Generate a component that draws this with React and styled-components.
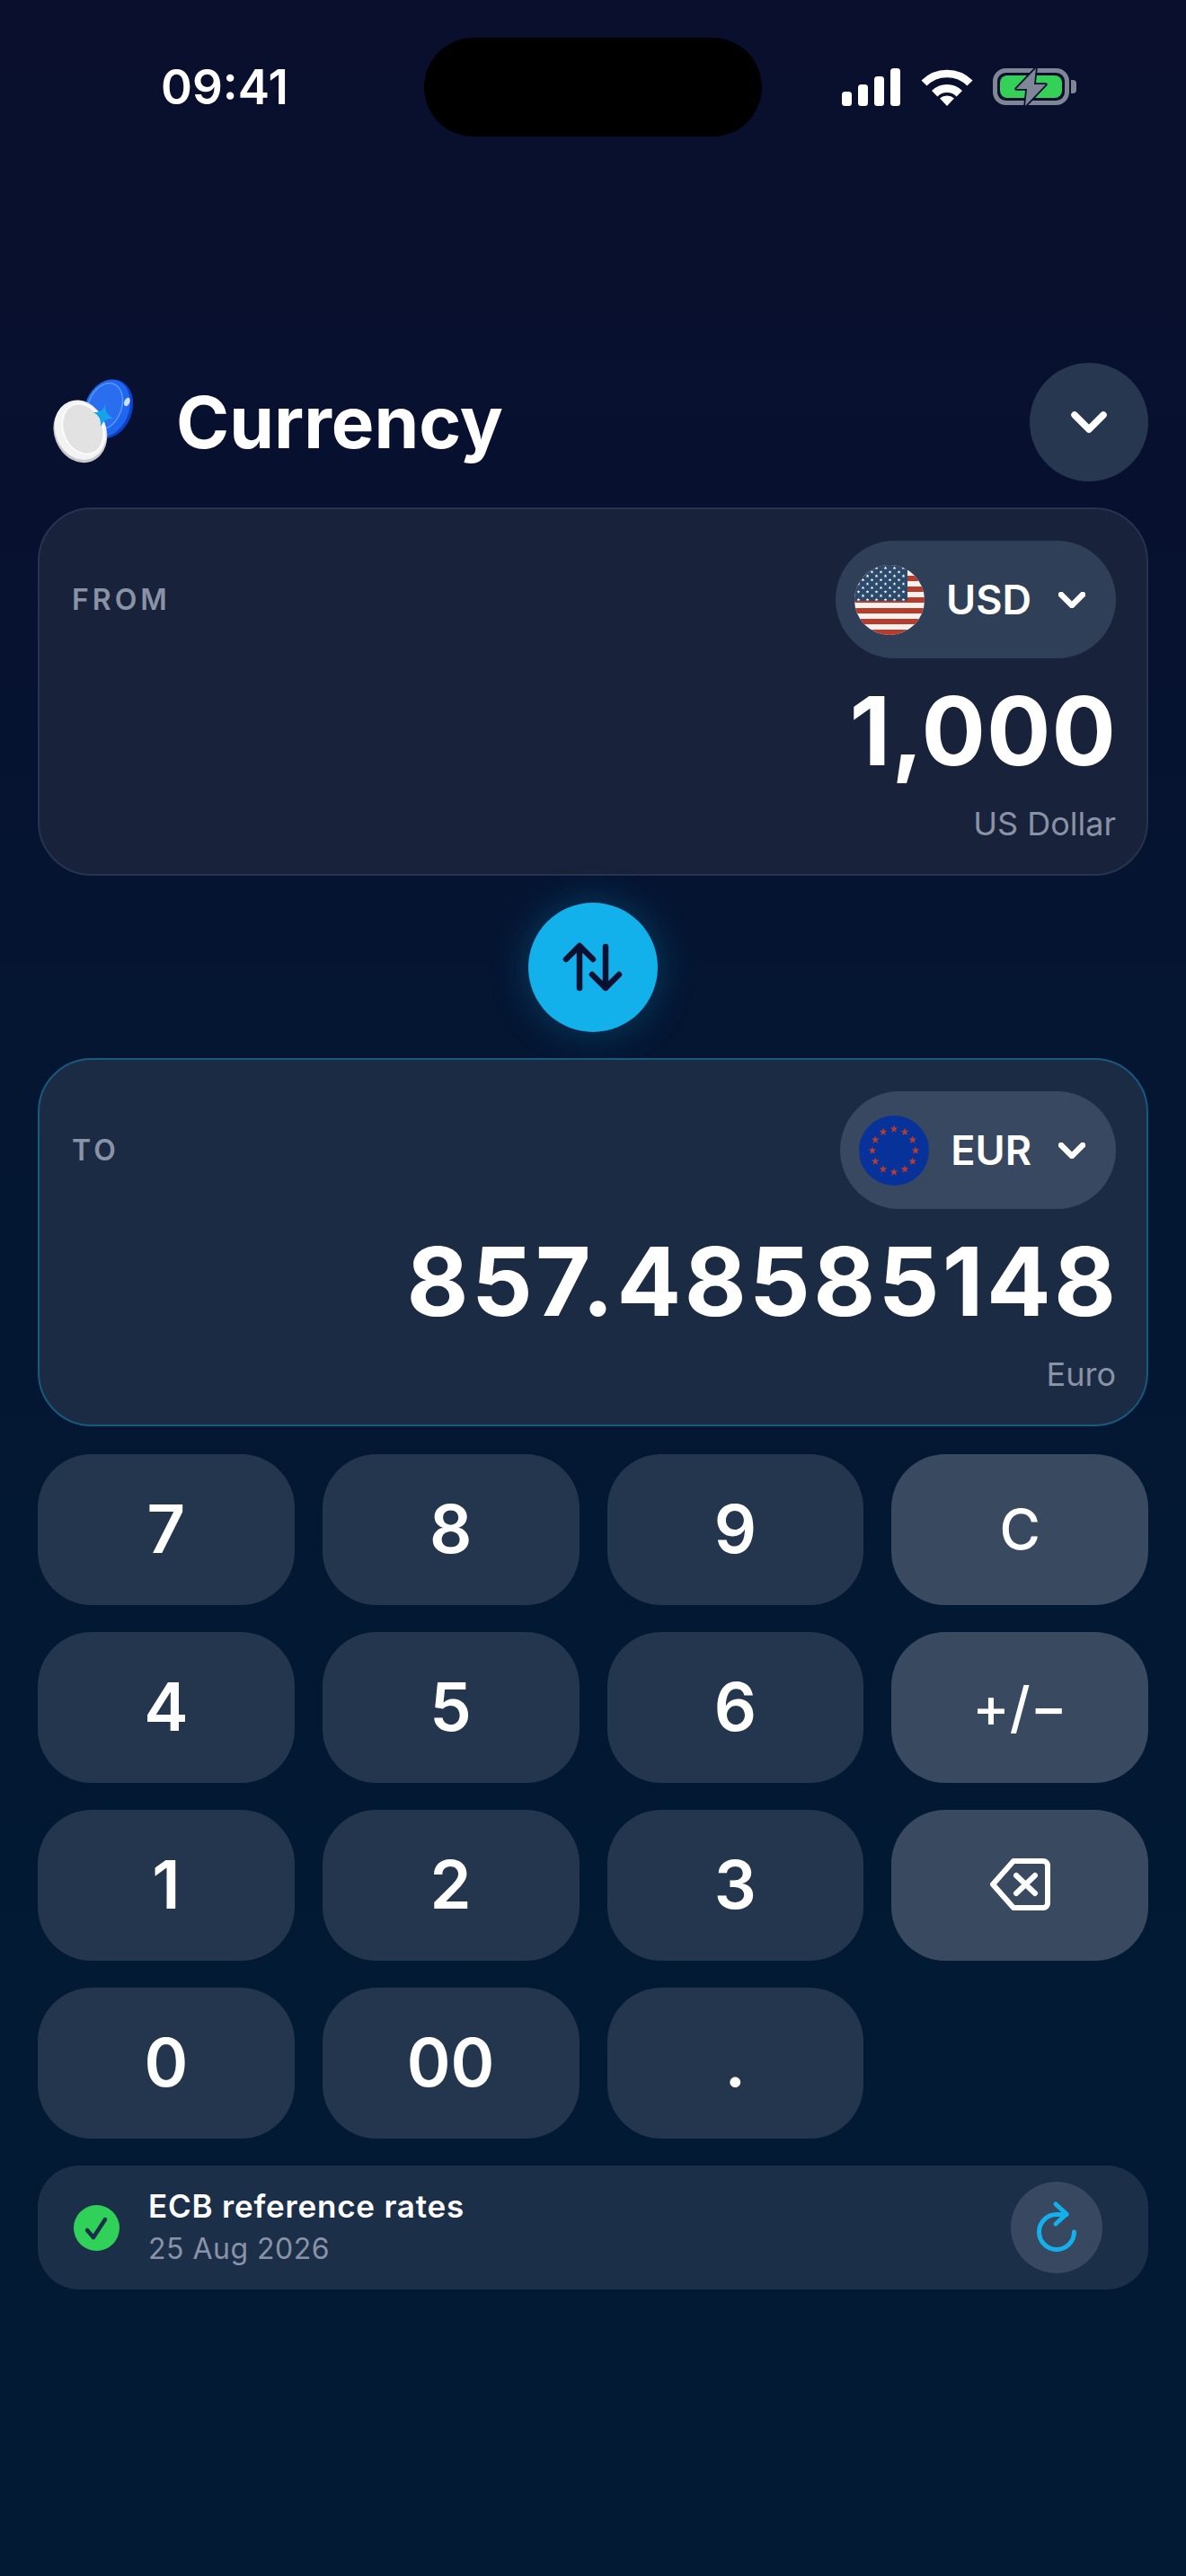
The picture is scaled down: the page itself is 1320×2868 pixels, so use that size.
import React from "react";
import styled, { createGlobalStyle } from "styled-components";

const Global = createGlobalStyle`
  html, body { margin: 0; padding: 0; background: #021a33; }
  * { box-sizing: border-box; }
`;

const Screen = styled.div`
  width: 1320px;
  height: 2868px;
  overflow: hidden;
  font-family: Inter, "Liberation Sans", sans-serif;
  color: #fff;
  background: linear-gradient(180deg, #090f2d 0%, #07112f 20%, #041632 42%, #021a33 80%, #021a33 100%);
`;

const StatusBar = styled.div`
  display: grid;
  grid-template-columns: 472px 376px 472px;
  align-items: center;
  height: 152px;
  padding-top: 42px;
`;

const Time = styled.div`
  padding-left: 179px;
  font-size: 53px;
  font-weight: 600;
  line-height: 60px;
`;

const Island = styled.div`
  height: 110px;
  border-radius: 55px;
  background: #000;
`;

const StatusIcons = styled.div`
  padding-left: 89px;
  display: flex;
  align-items: center;
`;

const Content = styled.main`
  margin-top: 252px;
  padding: 0 42px;
  display: flex;
  flex-direction: column;
`;

const Header = styled.header`
  display: flex;
  align-items: center;
  height: 132px;
  padding-left: 17px;
  margin-bottom: 29px;
`;

const Title = styled.h1`
  margin: 0 0 0 45px;
  flex: 1;
  font-size: 80px;
  font-weight: 700;
  line-height: 96px;
`;

const MenuButton = styled.button`
  width: 132px;
  height: 132px;
  border: 0;
  padding: 0;
  border-radius: 50%;
  background: #273750;
  display: flex;
  align-items: center;
  justify-content: center;
`;

const Card = styled.section`
  height: 410px;
  border-radius: 60px;
  padding: 35px 34px 0 36px;
  border: 2px solid ${(p) => (p.$active ? "#175a80" : "#273350")};
  background: ${(p) => (p.$active ? "#1c2b44" : "#18223a")};
`;

const CardTop = styled.div`
  display: flex;
  justify-content: space-between;
  align-items: center;
`;

const Label = styled.span`
  font-size: 32px;
  font-weight: 600;
  letter-spacing: 4px;
  color: #8a92a5;
`;

const Pill = styled.div`
  height: 131px;
  border-radius: 66px;
  padding: 0 34px 0 21px;
  background: ${(p) => (p.$active ? "#384860" : "#2f3f58")};
  display: flex;
  align-items: center;
`;

const Code = styled.span`
  margin: 0 30px 0 24px;
  font-size: 45px;
  font-weight: 600;
  line-height: 54px;
`;

const Amount = styled.div`
  margin-top: 31px;
  margin-right: ${(p) => -p.$tracking}px;
  text-align: right;
  font-size: 106px;
  font-weight: 700;
  line-height: 100px;
  letter-spacing: ${(p) => p.$tracking}px;
`;

const CurrencyName = styled.div`
  margin-top: 33px;
  text-align: right;
  font-size: 36px;
  line-height: 40px;
  color: #8a92a5;
`;

const SwapRow = styled.div`
  display: flex;
  justify-content: center;
  padding: 30px 0 29px;
`;

const SwapButton = styled.button`
  width: 144px;
  height: 144px;
  border: 0;
  padding: 0;
  border-radius: 50%;
  background: #13b1ec;
  box-shadow: 0 0 44px rgba(19, 177, 236, 0.28);
  display: flex;
  align-items: center;
  justify-content: center;
`;

const Keypad = styled.div`
  margin-top: 31px;
  display: grid;
  grid-template-columns: repeat(4, 1fr);
  grid-auto-rows: 168px;
  column-gap: 31px;
  row-gap: 30px;
`;

const Key = styled.button`
  border: 0;
  padding: 0 0 2px;
  border-radius: 60px;
  font-family: inherit;
  color: #fff;
  font-weight: ${(p) => (p.$util ? 500 : 600)};
  font-size: ${(p) => (p.$util ? "62px" : "74px")};
  background: ${(p) => (p.$util ? "#384960" : "#23364e")};
  display: flex;
  align-items: center;
  justify-content: center;
`;

const InfoBar = styled.footer`
  margin-top: 30px;
  height: 138px;
  border-radius: 46px;
  background: #1c2f49;
  display: flex;
  align-items: center;
  padding: 0 51px 0 40px;
`;

const OkBadge = styled.div`
  width: 51px;
  height: 51px;
  border-radius: 50%;
  background: #30d158;
  display: flex;
`;

const InfoText = styled.div`
  flex: 1;
  margin-left: 32px;
`;

const InfoTitle = styled.div`
  font-size: 35px;
  font-weight: 600;
  line-height: 48px;
  letter-spacing: 0.8px;
`;

const InfoDate = styled.div`
  font-size: 32px;
  line-height: 48px;
  letter-spacing: 0.5px;
  color: #8a92a5;
`;

const RefreshButton = styled.button`
  width: 102px;
  height: 102px;
  border: 0;
  padding: 0;
  border-radius: 50%;
  background: #384860;
  display: flex;
  align-items: center;
  justify-content: center;
`;

const WifiIcon = styled.svg`
  margin-left: 23px;
`;

const BatteryIcon = styled.svg`
  margin-left: 22px;
`;

const Signal = () => (
  <svg width="65" height="42" viewBox="0 0 65 42" fill="#fff">
    <rect x="0" y="26" width="11" height="16" rx="3.5" />
    <rect x="18" y="18" width="11" height="24" rx="3.5" />
    <rect x="36" y="9" width="11" height="33" rx="3.5" />
    <rect x="54" y="0" width="11" height="42" rx="3.5" />
  </svg>
);

const Wifi = () => (
  <WifiIcon width="58" height="42" viewBox="0 0 58 42" fill="none" stroke="#fff">
    <path d="M3.5 16.5 A36 36 0 0 1 54.5 16.5" strokeWidth="8.5" />
    <path d="M15.2 28.2 A19.5 19.5 0 0 1 42.8 28.2" strokeWidth="9" />
    <path d="M21 33.5 A12 12 0 0 1 37 33.5 L29 42 Z" fill="#fff" stroke="none" />
  </WifiIcon>
);

const Battery = () => (
  <BatteryIcon width="94" height="46" viewBox="0 0 94 46">
    <rect x="2.5" y="4.5" width="80" height="36" rx="12" fill="none" stroke="#7f8797" strokeWidth="5" />
    <path d="M87 15 h2 a4 4 0 0 1 4 4 v7 a4 4 0 0 1 -4 4 h-2 Z" fill="#7f8797" />
    <rect x="8" y="10" width="69" height="25" rx="8" fill="#34d058" />
    <path
      d="M48 2 L26 25 L38 25 L36 44 L59 20 L46 20 Z"
      fill="#7f8797"
      stroke="#0a1030"
      strokeWidth="3.5"
      strokeLinejoin="round"
      paintOrder="stroke"
    />
  </BatteryIcon>
);

const Coins = () => (
  <svg width="92" height="96" viewBox="0 0 92 96">
    <g transform="translate(61 33) rotate(22)">
      <ellipse cx="1" cy="0" rx="26" ry="34" fill="#0f3fc9" />
      <ellipse cx="-1" cy="0" rx="24.5" ry="33" fill="#1e66ee" />
      <ellipse cx="-4" cy="-1" rx="18.5" ry="27" fill="#2a6ef0" stroke="#5a97f8" strokeWidth="1.5" />
      <ellipse cx="17" cy="-15" rx="3" ry="5" fill="#cfe0fb" />
    </g>
    <g transform="translate(30 58) rotate(-22)">
      <ellipse cx="0" cy="1" rx="29" ry="35" fill="#c9c9cd" />
      <ellipse cx="1" cy="-1" rx="28" ry="34" fill="#f3f3f4" />
      <ellipse cx="4" cy="-1" rx="22" ry="29" fill="#e2e2e3" stroke="#fbfbfb" strokeWidth="2" />
    </g>
    <path d="M58 28 Q57 38 67 44 Q57 43 53 53 Q54 42 45 37 Q56 38 58 28 Z" fill="#16a4e8" />
  </svg>
);

const Chevron = ({ size = 30, sw = 6.5 }) => (
  <svg width={size} height={size * 0.6} viewBox="0 0 30 18" fill="none" stroke="#fff" strokeWidth={(sw * 30) / size} strokeLinecap="round" strokeLinejoin="round">
    <path d="M3 3 L15 15 L27 3" />
  </svg>
);

const starPoints = (cx, cy, r) =>
  Array.from({ length: 10 }, (_, i) => {
    const a = (-90 + i * 36) * (Math.PI / 180);
    const rr = i % 2 ? r * 0.42 : r;
    return `${(cx + rr * Math.cos(a)).toFixed(2)},${(cy + rr * Math.sin(a)).toFixed(2)}`;
  }).join(" ");

const UsFlag = () => {
  const stars = [];
  for (let row = 0; row < 9; row++) {
    const odd = row % 2 === 1;
    for (let col = 0; col < (odd ? 5 : 6); col++) {
      stars.push(starPoints(4.5 + col * 10 + (odd ? 5 : 0), 3.5 + row * 4.4, 2));
    }
  }
  return (
    <svg width="78" height="78" viewBox="0 0 78 78">
      <defs>
        <clipPath id="usClip">
          <circle cx="39" cy="39" r="39" />
        </clipPath>
      </defs>
      <g clipPath="url(#usClip)">
        <rect width="78" height="78" fill="#f4f1ee" />
        {Array.from({ length: 7 }, (_, i) => (
          <rect key={i} y={i * 12} width="78" height="6" fill="#b83c2c" />
        ))}
        <rect width="59" height="40" fill="#2b4a6c" />
        {stars.map((p, i) => (
          <polygon key={i} points={p} fill="#fff" />
        ))}
      </g>
    </svg>
  );
};

const EuFlag = () => (
  <svg width="78" height="78" viewBox="0 0 78 78">
    <circle cx="39" cy="39" r="39" fill="#07329a" />
    {Array.from({ length: 12 }, (_, i) => {
      const a = (i * 30 * Math.PI) / 180;
      return <polygon key={i} points={starPoints(39 + 24 * Math.cos(a), 39 + 24 * Math.sin(a), 4.6)} fill="#b83c2c" />;
    })}
  </svg>
);

const SwapIcon = () => (
  <svg width="72" height="60" viewBox="0 0 72 60" fill="none" stroke="#0a1030" strokeWidth="6.5" strokeLinecap="round" strokeLinejoin="round">
    <path d="M21 53 V7 M6 21 L21 6 L36 21" />
    <path d="M50 7 V53 M35 38 L50 53 L65 38" />
  </svg>
);

const Backspace = () => (
  <svg width="67" height="58" viewBox="0 0 67 58" fill="none" stroke="#fff" strokeWidth="6" strokeLinecap="round" strokeLinejoin="round">
    <path d="M26 3 H59 a5 5 0 0 1 5 5 V50 a5 5 0 0 1 -5 5 H26 L3 29 Z" />
    <path d="M29 19 L50 39 M50 19 L29 39" />
  </svg>
);

const Check = () => (
  <svg width="51" height="51" viewBox="0 0 51 51" fill="none" stroke="#1c2e48" strokeWidth="4.5" strokeLinecap="round" strokeLinejoin="round">
    <path d="M15 28 L22 36 L35 16" />
  </svg>
);

const Refresh = () => (
  <svg width="60" height="68" viewBox="0 0 60 68" fill="none" stroke="#13b1ec" strokeWidth="5" strokeLinecap="round" strokeLinejoin="round">
    <path d="M49.5 39 A19.5 19.5 0 1 1 30 19.5 L41 19.5" />
    <path d="M29 8 L41 19 L29 30" />
  </svg>
);

const rows = [
  ["7", "8", "9", "C"],
  ["4", "5", "6", "+/−"],
  ["1", "2", "3", "back"],
  ["0", "00", "."],
];

export default function App() {
  return (
    <Screen>
      <Global />
      <StatusBar>
        <Time>09:41</Time>
        <Island />
        <StatusIcons>
          <Signal />
          <Wifi />
          <Battery />
        </StatusIcons>
      </StatusBar>
      <Content>
        <Header>
          <Coins />
          <Title>Currency</Title>
          <MenuButton aria-label="Menu">
            <Chevron size={40} sw={7.5} />
          </MenuButton>
        </Header>
        <Card>
          <CardTop>
            <Label>FROM</Label>
            <Pill>
              <UsFlag />
              <Code>USD</Code>
              <Chevron />
            </Pill>
          </CardTop>
          <Amount $tracking={1}>1,000</Amount>
          <CurrencyName>US Dollar</CurrencyName>
        </Card>
        <SwapRow>
          <SwapButton aria-label="Swap">
            <SwapIcon />
          </SwapButton>
        </SwapRow>
        <Card $active>
          <CardTop>
            <Label>TO</Label>
            <Pill $active>
              <EuFlag />
              <Code>EUR</Code>
              <Chevron />
            </Pill>
          </CardTop>
          <Amount $tracking={3.4}>857.48585148</Amount>
          <CurrencyName>Euro</CurrencyName>
        </Card>
        <Keypad>
          {rows.flat().map((k) => (
            <Key key={k} $util={k === "C" || k === "+/−" || k === "back"}>
              {k === "back" ? <Backspace /> : k}
            </Key>
          ))}
        </Keypad>
        <InfoBar>
          <OkBadge>
            <Check />
          </OkBadge>
          <InfoText>
            <InfoTitle>ECB reference rates</InfoTitle>
            <InfoDate>25 Aug 2026</InfoDate>
          </InfoText>
          <RefreshButton aria-label="Refresh">
            <Refresh />
          </RefreshButton>
        </InfoBar>
      </Content>
    </Screen>
  );
}
